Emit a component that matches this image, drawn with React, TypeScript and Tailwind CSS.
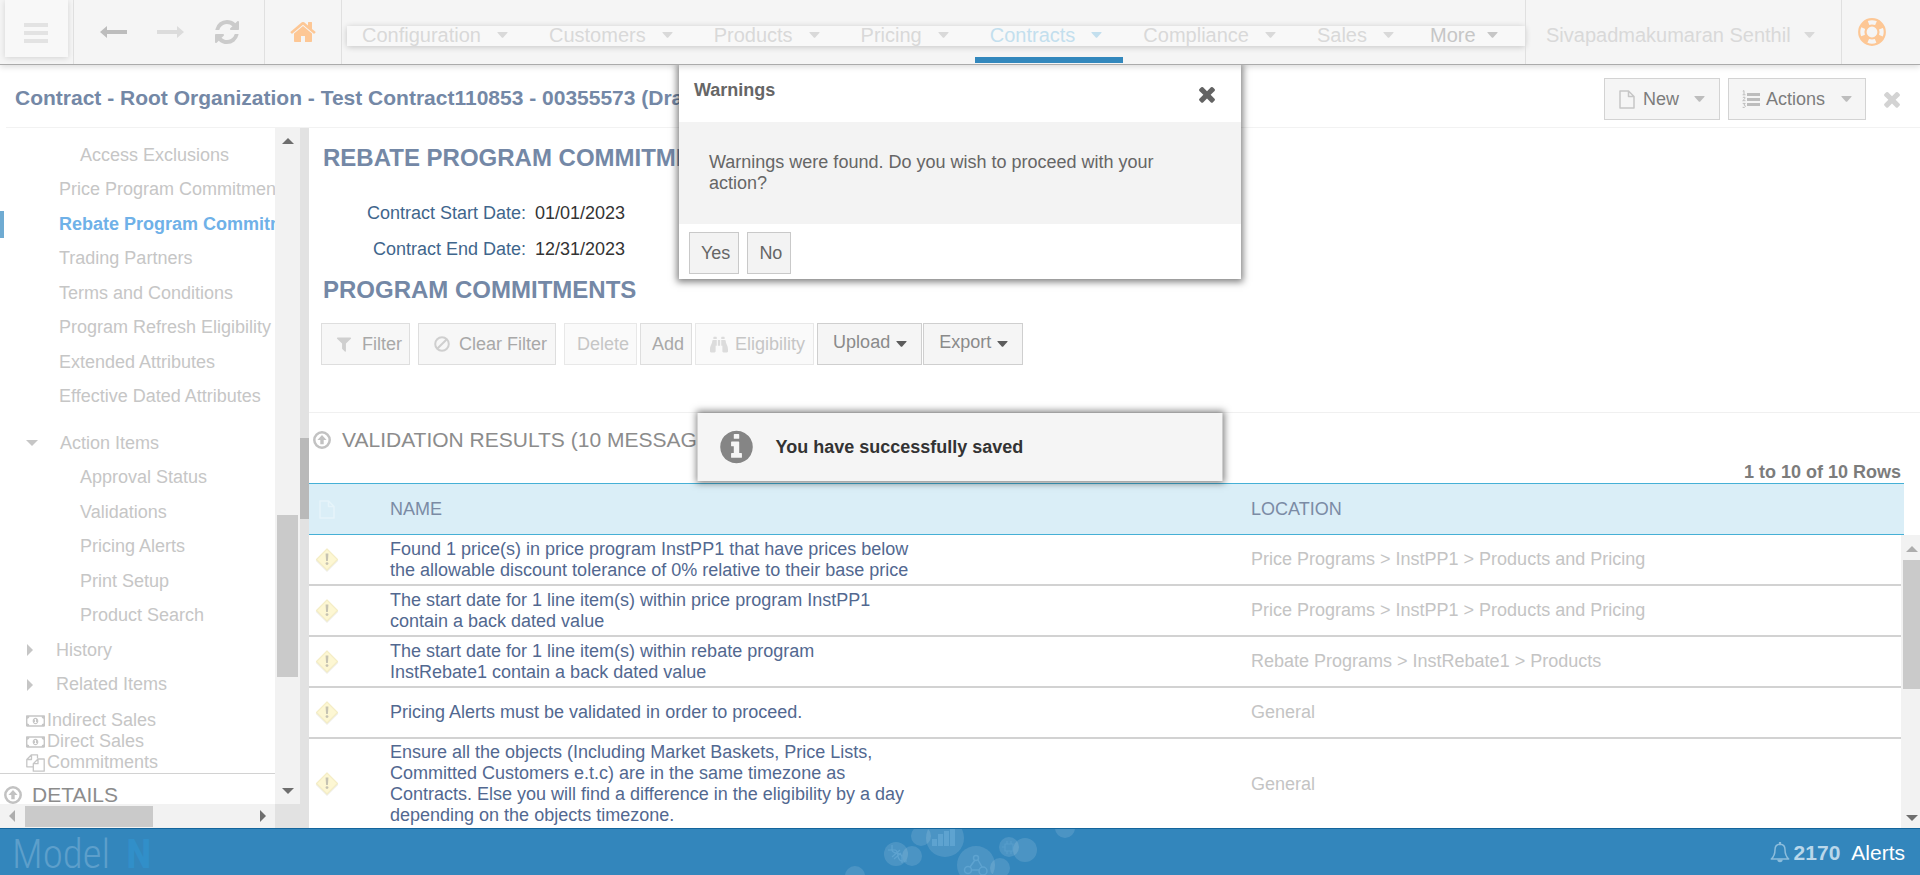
import type { ReactNode } from "react";
import { FaBinoculars, FaRegMoneyBillAlt } from "react-icons/fa";

type IconProps = { className?: string };

function Glyph({ d, className = "" }: { d: string; className?: string }) {
  return (
    <svg viewBox="0 0 1792 1792" fill="currentColor" aria-hidden="true" className={`shrink-0 ${className}`}>
      <path d={d} />
    </svg>
  );
}

const TIMES =
  "M1490 1322q0 40-28 68l-136 136q-28 28-68 28t-68-28l-294-294-294 294q-28 28-68 28t-68-28l-136-136q-28-28-28-68t28-68l294-294-294-294q-28-28-28-68t28-68l136-136q28-28 68-28t68 28l294 294 294-294q28-28 68-28t68 28l136 136q28 28 28 68t-28 68l-294 294 294 294q28 28 28 68z";
const REFRESH =
  "M1639 1056q0 5-1 7-64 268-268 434.5t-478 166.5q-146 0-282.5-55t-243.5-157l-129 129q-19 19-45 19t-45-19-19-45v-448q0-26 19-45t45-19h448q26 0 45 19t19 45-19 45l-137 137q71 66 161 102t187 36q134 0 250-65t186-179q11-17 53-117 8-23 30-23h192q13 0 22.5 9.5t9.5 22.5zm25-800v448q0 26-19 45t-45 19h-448q-26 0-45-19t-19-45 19-45l138-138q-148-137-349-137-134 0-250 65t-186 179q-11 17-53 117-8 23-30 23h-199q-13 0-22.5-9.5t-9.5-22.5v-7q65-268 270-434.5t480-166.5q146 0 284 55.5t245 156.5l130-129q19-19 45-19t45 19 19 45z";
const HOME =
  "M1472 992v480q0 26-19 45t-45 19h-384v-384h-256v384h-384q-26 0-45-19t-19-45v-480q0-1 .5-3t.5-3l575-474 575 474q1 2 1 6zm223-69l-62 74q-8 9-21 11h-3q-13 0-21-7l-692-577-692 577q-12 8-24 7-13-2-21-11l-62-74q-8-10-7-23.5t11-21.5l719-599q32-26 76-26t76 26l244 204v-195q0-14 9-23t23-9h192q14 0 23 9t9 23v408l219 182q10 8 11 21.5t-7 23.5z";
const FILTER =
  "M1595 295q17 41-14 70l-493 493v742q0 42-39 59-13 5-25 5-27 0-45-19l-256-256q-19-19-19-45v-486l-493-493q-31-29-14-70 17-39 59-39h1280q42 0 59 39z";
const INFO =
  "M1152 1376v-160q0-14-9-23t-23-9h-96v-512q0-14-9-23t-23-9h-320q-14 0-23 9t-9 23v160q0 14 9 23t23 9h96v320h-96q-14 0-23 9t-9 23v160q0 14 9 23t23 9h448q14 0 23-9t9-23zm-128-896v-160q0-14-9-23t-23-9h-192q-14 0-23 9t-9 23v160q0 14 9 23t23 9h192q14 0 23-9t9-23zm640 416q0 209-103 385.5t-279.5 279.5-385.5 103-385.5-103-279.5-279.5-103-385.5 103-385.5 279.5-279.5 385.5-103 385.5 103 279.5 279.5 103 385.5z";

function Caret({ className = "" }: IconProps) {
  return (
    <svg viewBox="0 0 12 7" fill="currentColor" aria-hidden="true" className={`h-[6px] w-[11px] shrink-0 ${className}`}>
      <path d="M0.5 0h11q.8.2.3.9L6.6 6.6q-.6.5-1.2 0L.2.9Q-.3.2.5 0z" />
    </svg>
  );
}

function LongArrow({ className = "" }: IconProps) {
  return (
    <svg viewBox="0 0 27 12" fill="currentColor" aria-hidden="true" className={`h-3 w-[27px] ${className}`}>
      <path d="M0 6L7 0v4h20v4H7v4z" />
    </svg>
  );
}

function FileIcon({ className = "" }: IconProps) {
  return (
    <svg viewBox="0 0 16 19" fill="none" stroke="currentColor" strokeWidth="1.5" strokeLinejoin="round" aria-hidden="true" className={`h-[19px] w-4 shrink-0 ${className}`}>
      <path d="M1 1h8.5L15 6.500V18H1zM9.500 1v5.500H15" />
    </svg>
  );
}

function ListIcon({ className = "" }: IconProps) {
  return (
    <svg viewBox="0 0 18 19" fill="none" stroke="currentColor" aria-hidden="true" className={`h-[19px] w-[18px] shrink-0 ${className}`}>
      <path strokeWidth="3" d="M5 4.500h13M5 9.500h13M5 14.500h13" />
      <path strokeWidth="1" d="M.8 1.200l1.200-.6V4.600M.6 4.800h2.900M.8 7.700q1.200-1.100 2.200-.3.700 1-2.300 3.300h2.800M.7 13.400h2.500l-1.300 1.600q1.600.1 1.400 1.500-.4 1.500-2.700.8" />
    </svg>
  );
}

function BanIcon({ className = "" }: IconProps) {
  return (
    <svg viewBox="0 0 16 16" fill="none" stroke="currentColor" strokeWidth="2" aria-hidden="true" className={`h-4 w-4 shrink-0 ${className}`}>
      <circle cx="8" cy="8" r="6.800" />
      <path d="M3.200 12.800l9.600-9.600" />
    </svg>
  );
}

function CircleUp({ className = "" }: IconProps) {
  return (
    <svg viewBox="0 0 18 18" aria-hidden="true" className={`h-[18px] w-[18px] shrink-0 ${className}`}>
      <circle cx="9" cy="9" r="7.700" fill="none" stroke="currentColor" strokeWidth="2.500" />
      <path fill="currentColor" d="M9 4.100L13.600 9h-2.900v4.200H7.300V9H4.400z" />
    </svg>
  );
}

function LifeRing({ className = "" }: IconProps) {
  return (
    <svg viewBox="0 0 28 28" fill="none" stroke="currentColor" aria-hidden="true" className={`h-7 w-7 ${className}`}>
      <circle cx="14" cy="14" r="12.800" strokeWidth="2.200" />
      <circle cx="14" cy="14" r="6.500" strokeWidth="2.200" />
      <circle cx="14" cy="14" r="9.800" strokeWidth="6" strokeDasharray="7.700 7.690" strokeDashoffset="-3.850" />
    </svg>
  );
}

function CopyIcon({ className = "" }: IconProps) {
  return (
    <svg viewBox="0 0 19 18" fill="none" stroke="currentColor" strokeWidth="1.300" strokeLinejoin="round" aria-hidden="true" className={`h-[18px] w-[19px] shrink-0 ${className}`}>
      <path d="M11.500 4.500V.8H5.500L.8 5.500v7.300h6.500M5.500.8v4.700H.8" />
      <path d="M12 5h6.200v12.200H7.300V9.700zM12 5v4.700H7.300" />
    </svg>
  );
}

function BellIcon({ className = "" }: IconProps) {
  return (
    <svg viewBox="0 0 20 21" fill="none" stroke="currentColor" strokeWidth="1.500" aria-hidden="true" className={`h-[21px] w-5 ${className}`}>
      <path strokeLinejoin="round" d="M10 2.200c-3.200 0-5 2.400-5 5.500 0 5-1.600 7.300-3.700 9.300h17.400c-2.100-2-3.700-4.300-3.700-9.300 0-3.100-1.800-5.500-5-5.500z" />
      <path fill="currentColor" stroke="none" d="M8.900 0h2.200v2.500H8.900zM7.300 17.500h5.400a2.700 2.700 0 0 1-5.400 0z" />
    </svg>
  );
}

function WarningIcon({ className = "" }: IconProps) {
  return (
    <svg viewBox="0 0 24 24" aria-hidden="true" className={`h-6 w-6 ${className}`}>
      <path d="M12 2.500L23.300 12.800 12 24 .7 12.800z" fill="#eeeeea" />
      <path d="M12 1L22.500 11.500 12 22 1.500 11.500z" fill="#fdf7d3" stroke="#f4edc6" strokeWidth="1.200" strokeLinejoin="round" />
      <path d="M10.600 5.500h2.800l-.5 7.500h-1.800z" fill="#c6c3b2" />
      <circle cx="12" cy="15.600" r="1.400" fill="#c6c3b2" />
    </svg>
  );
}

function Triangle({ dir, className = "" }: { dir: "up" | "down" | "left" | "right"; className?: string }) {
  const paths = { up: "M0 9L6 3l6 6z", down: "M0 3h12L6 9z", left: "M9 0v12L3 6z", right: "M3 0l6 6-6 6z" };
  return (
    <svg viewBox="0 0 12 12" fill="currentColor" aria-hidden="true" className={`h-3 w-3 shrink-0 ${className}`}>
      <path d={paths[dir]} />
    </svg>
  );
}

const menus = ["Configuration", "Customers", "Products", "Pricing", "Contracts", "Compliance", "Sales"];

function TopBar() {
  return (
    <header className="relative z-20 flex h-[65px] shrink-0 border-b border-[#ababab] bg-[#f5f5f5] text-[20px] text-[#d9d9d9] shadow-[0_2px_6px_rgba(0,0,0,0.14)]">
      <div className="w-[74px] shrink-0 border-r border-[#e0e0e0] pl-[5px]">
        <button aria-label="Menu" className="flex h-[57px] w-[63px] flex-col items-center justify-center gap-1 bg-[#f8f8f8] pr-[2px] pt-2 shadow-[0_1px_6px_rgba(0,0,0,0.14)]">
          <span className="h-1 w-6 bg-[#e3e3e3]" />
          <span className="h-1 w-6 bg-[#e3e3e3]" />
          <span className="h-1 w-6 bg-[#e3e3e3]" />
        </button>
      </div>
      <div className="flex w-[191px] shrink-0 items-center gap-[30px] border-r border-[#e0e0e0] pl-[26px]">
        <button aria-label="Back" className="text-[#bdbdbd]"><LongArrow /></button>
        <button aria-label="Forward" className="text-[#dcdcdc]"><LongArrow className="rotate-180" /></button>
        <button aria-label="Refresh" className="-ml-px text-[#cbcbcb]"><Glyph d={REFRESH} className="h-7 w-7" /></button>
      </div>
      <div className="flex w-[77px] shrink-0 items-center justify-center border-r border-[#e0e0e0]">
        <a href="#home" aria-label="Home" className="text-[#fdc795]"><Glyph d={HOME} className="h-7 w-7" /></a>
      </div>
      <nav className="ml-[5px] mt-[26px] flex h-5 min-w-0 flex-1 items-center gap-[5px] bg-[#f8f8f8] pb-[2px] leading-[20px] shadow-[0_1px_6px_rgba(0,0,0,0.2)]">
        {menus.map((m) => (
          <button
            key={m}
            className={`relative flex items-center gap-4 pl-[15px] pr-[21px] ${m === "Contracts" ? "text-[#c3dfee]" : ""}`}
          >
            {m}
            <Caret />
            {m === "Contracts" && <span className="absolute -bottom-[18px] left-0 h-[6px] w-full bg-[#3388bd]" />}
          </button>
        ))}
        <button className="flex items-center gap-[11px] pl-[10px] text-[#c6c6c6]">
          More
          <Caret />
        </button>
      </nav>
      <button className="flex w-[317px] shrink-0 items-center justify-between border-x border-[#e0e0e0] pl-5 pr-[26px] pt-[6px] leading-[20px]">
        Sivapadmakumaran Senthil
        <Caret />
      </button>
      <div className="flex w-[78px] shrink-0 items-center pl-4">
        <a href="#help" aria-label="Help" className="text-[#fdc795]"><LifeRing /></a>
      </div>
    </header>
  );
}

function TitleBar() {
  return (
    <div className="ml-[6px] flex h-[63px] shrink-0 items-center border-b border-[#f2f2f2] pl-[9px] pr-4 pt-1">
      <h1 className="min-w-0 flex-1 truncate text-[21px] font-bold leading-[24px] text-[#7488a6]">
        Contract - Root Organization - Test Contract110853 - 00355573 (Draft)
      </h1>
      <div className="flex items-center gap-2 pt-[2px] text-[18px] text-[#7c7c7c]">
        <button className="flex h-[42px] items-center border border-[#d3d3d3] bg-[#f5f5f5] px-[14px]">
          <FileIcon className="mr-2 text-[#c6c6c6]" />
          New
          <Caret className="ml-[15px] text-[#bdbdbd]" />
        </button>
        <button className="flex h-[42px] items-center border border-[#d3d3d3] bg-[#f5f5f5] px-[13px]">
          <ListIcon className="mr-[6px] text-[#bdbdbd]" />
          Actions
          <Caret className="ml-4 text-[#bdbdbd]" />
        </button>
        <button aria-label="Close contract" className="ml-[6px] text-[#d3d3d3]">
          <Glyph d={TIMES} className="h-6 w-6" />
        </button>
      </div>
    </div>
  );
}

const pages = [
  "Price Program Commitments",
  "Rebate Program Commitments",
  "Trading Partners",
  "Terms and Conditions",
  "Program Refresh Eligibility",
  "Extended Attributes",
  "Effective Dated Attributes",
];
const actions = ["Approval Status", "Validations", "Pricing Alerts", "Print Setup", "Product Search"];

function NavLink({ className, children }: { className: string; children: ReactNode }) {
  return (
    <a href="#page" className={`flex items-center whitespace-nowrap ${className}`}>
      {children}
    </a>
  );
}

function Sidebar() {
  return (
    <aside className="flex w-[300px] shrink-0 flex-col">
      <div className="flex min-h-0 flex-1">
        <div className="flex min-w-0 flex-1 flex-col overflow-hidden text-[18px] text-[#c6c6c6]">
          <div className="mt-[10px] grid h-[276px] shrink-0 auto-rows-fr">
            <NavLink className="pl-20">Access Exclusions</NavLink>
            {pages.map((p) =>
              p.startsWith("Rebate") ? (
                <NavLink key={p} className="relative pl-[59px] font-bold text-[#6fb1e8]">
                  <span className="absolute left-0 h-[27px] w-1 bg-[#6fabd2]" />
                  {p}
                </NavLink>
              ) : (
                <NavLink key={p} className="pl-[59px]">{p}</NavLink>
              ),
            )}
          </div>
          <div className="mt-3 grid h-[276px] shrink-0 auto-rows-fr">
            <NavLink className="gap-[22px] pl-[26px]"><Triangle dir="down" />Action Items</NavLink>
            {actions.map((a) => (
              <NavLink key={a} className="pl-20">{a}</NavLink>
            ))}
            <NavLink className="gap-5 pl-6"><Triangle dir="right" />History</NavLink>
            <NavLink className="gap-5 pl-6"><Triangle dir="right" />Related Items</NavLink>
          </div>
          <div className="mt-2 shrink-0 border-b border-[#d2d2d2] pl-[26px] leading-[21px]">
            <NavLink className="gap-[2px]"><FaRegMoneyBillAlt className="h-5 w-[19px]" />Indirect Sales</NavLink>
            <NavLink className="gap-[2px]"><FaRegMoneyBillAlt className="h-5 w-[19px]" />Direct Sales</NavLink>
            <NavLink className="gap-[2px]"><CopyIcon />Commitments</NavLink>
          </div>
          <button className="mt-2 flex shrink-0 items-center gap-[10px] pl-1 text-[21px] leading-[26px] text-[#8c8c8c]">
            <CircleUp className="text-[#c2c2c2]" />
            DETAILS
          </button>
        </div>
        <div className="flex w-[25px] flex-col items-center justify-between bg-[#f2f2f2] py-[7px] text-[#6e6e6e]">
          <Triangle dir="up" />
          <span className="mt-[260px] h-[162px] w-[21px] bg-[#cacaca]" />
          <Triangle dir="down" />
        </div>
      </div>
      <div className="flex h-6 shrink-0">
        <div className="flex flex-1 items-center bg-[#f2f2f2] pl-[6px] pr-[6px]">
          <Triangle dir="left" className="text-[#adadad]" />
          <span className="ml-[7px] mr-auto h-[21px] w-32 bg-[#cacaca]" />
          <Triangle dir="right" className="text-[#6e6e6e]" />
        </div>
        <div className="w-[25px] bg-[#e2e2e2]" />
      </div>
    </aside>
  );
}

function Toolbar() {
  const base = "flex h-[42px] items-center border";
  return (
    <div className="mt-[19px] flex pl-3 text-[18px] text-[#a8a8a8]">
      <button className={`${base} mr-2 gap-[9px] border-[#dedede] bg-[#f7f7f7] pl-[13px] pr-[7px]`}>
        <Glyph d={FILTER} className="h-[18px] w-[18px] text-[#cfcfcf]" />
        Filter
      </button>
      <button className={`${base} mr-2 gap-[9px] border-[#dedede] bg-[#f7f7f7] pl-[15px] pr-2`}>
        <BanIcon className="text-[#cfcfcf]" />
        Clear Filter
      </button>
      <button disabled className={`${base} mr-[3px] border-[#e8e8e8] bg-[#fafafa] pl-3 pr-[7px] text-[#c6c6c6]`}>Delete</button>
      <button className={`${base} mr-[3px] border-[#dedede] bg-[#f7f7f7] pl-[11px] pr-[7px]`}>Add</button>
      <button disabled className={`${base} mr-[3px] gap-[7px] border-[#e8e8e8] bg-[#fafafa] pl-[14px] pr-2 text-[#c6c6c6]`}>
        <FaBinoculars className="h-[19px] w-[18px] text-[#dcdcdc]" />
        Eligibility
      </button>
      <button className={`${base} mr-px gap-[6px] border-[#cfcfcf] bg-[#f5f5f5] pb-1 pl-[15px] pr-[14px] text-[#8a8a8a]`}>
        Upload
        <Caret className="mt-1 text-[#5c5c5c]" />
      </button>
      <button className={`${base} gap-[6px] border-[#cfcfcf] bg-[#f5f5f5] pb-1 pl-[15px] pr-[14px] text-[#8a8a8a]`}>
        Export
        <Caret className="mt-1 text-[#5c5c5c]" />
      </button>
    </div>
  );
}

const messages = [
  ["Found 1 price(s) in price program InstPP1 that have prices below the allowable discount tolerance of 0% relative to their base price", "Price Programs > InstPP1 > Products and Pricing"],
  ["The start date for 1 line item(s) within price program InstPP1 contain a back dated value", "Price Programs > InstPP1 > Products and Pricing"],
  ["The start date for 1 line item(s) within rebate program InstRebate1 contain a back dated value", "Rebate Programs > InstRebate1 > Products"],
  ["Pricing Alerts must be validated in order to proceed.", "General"],
  ["Ensure all the objects (Including Market Baskets, Price Lists, Committed Customers e.t.c) are in the same timezone as Contracts. Else you will find a difference in the eligibility by a day depending on the objects timezone.", "General"],
];

function Results() {
  return (
    <section className="flex min-h-0 flex-1 flex-col border-t border-[#f0f0f0]">
      <div className="flex h-[70px] shrink-0 justify-between pl-1 pr-[19px]">
        <button className="mt-[14px] flex h-[26px] items-center gap-[11px] text-[21px] text-[#8c8c8c]">
          <CircleUp className="text-[#c2c2c2]" />
          VALIDATION RESULTS (10 MESSAGES)
        </button>
        <p className="self-end text-[18px] font-bold leading-[22px] text-[#7c7c7c]">1 to 10 of 10 Rows</p>
      </div>
      <div className="flex min-h-0 flex-1">
        <div className="min-w-0 flex-1 overflow-hidden">
          <table className="w-full table-fixed border-separate border-spacing-0 text-left text-[18px] leading-[21px]">
            <colgroup>
              <col className="w-[81px]" />
              <col />
              <col className="w-[650px]" />
            </colgroup>
            <thead>
              <tr className="h-[52px] bg-[#daeef7] text-[#7b8ba5]">
                <th className="border-y border-[#45b0d6] pl-[10px] font-normal"><FileIcon className="text-[#e6f4fa]" /></th>
                <th className="border-y border-[#45b0d6] font-normal">NAME</th>
                <th className="border-y border-[#45b0d6] font-normal">LOCATION</th>
              </tr>
            </thead>
            <tbody>
              {messages.map(([name, location], i) => (
                <tr key={i} className="h-[51px]">
                  <td className={`pl-[6px] ${i < 4 ? "border-b-2 border-[#d2d2d2]" : ""}`}><WarningIcon /></td>
                  <td className={`py-[3px] text-[#526890] ${i < 4 ? "border-b-2 border-[#d2d2d2]" : ""}`}>
                    <p className="max-w-[522px]">{name}</p>
                  </td>
                  <td className={`text-[#c4c4c4] ${i < 4 ? "border-b-2 border-[#d2d2d2]" : ""}`}>{location}</td>
                </tr>
              ))}
            </tbody>
          </table>
        </div>
        <div className="flex w-[19px] shrink-0 flex-col">
          <div className="h-[52px] w-[3px] border-y border-[#45b0d6] bg-[#daeef7]" />
          <div className="flex flex-1 flex-col items-center bg-[#f2f2f2] pb-1 pl-[2px] pt-2 text-[#adadad]">
            <Triangle dir="up" />
            <span className="mt-[5px] h-[129px] w-full bg-[#cacaca]" />
            <Triangle dir="down" className="mt-auto text-[#6e6e6e]" />
          </div>
        </div>
      </div>
    </section>
  );
}

function WarningsDialog() {
  return (
    <div role="dialog" aria-labelledby="warnings-title" className="absolute left-1/2 top-[65px] z-10 w-[562px] -translate-x-1/2 bg-white text-[18px] text-[#666] shadow-[0_1px_7px_2px_rgba(0,0,0,0.5)]">
      <div className="flex h-[57px] items-start justify-between pl-[15px] pr-[22px] pt-[14px]">
        <h2 id="warnings-title" className="font-bold leading-[22px]">Warnings</h2>
        <button aria-label="Close" className="pt-[3px] text-[#636363]"><Glyph d={TIMES} className="h-6 w-6" /></button>
      </div>
      <p className="bg-[#f3f3f3] px-[30px] py-[30px] pr-20 leading-[21px]">
        Warnings were found. Do you wish to proceed with your action?
      </p>
      <div className="flex gap-2 px-[10px] pb-[5px] pt-2">
        <button className="h-[42px] border border-[#c9c9c9] bg-[#f3f3f3] pl-[11px] pr-2">Yes</button>
        <button className="h-[42px] border border-[#c9c9c9] bg-[#f3f3f3] pl-[11px] pr-2">No</button>
      </div>
    </div>
  );
}

function Toast() {
  return (
    <div role="status" className="absolute left-1/2 top-[413px] z-10 flex h-[68px] w-[525px] -translate-x-1/2 items-center gap-5 bg-[#f5f5f5] pl-5 shadow-[0_0_7px_2px_rgba(0,0,0,0.5)]">
      <Glyph d={INFO} className="h-[38px] w-[38px] text-[#858585]" />
      <p className="text-[18px] font-bold leading-[22px] text-[#333]">You have successfully saved</p>
    </div>
  );
}

function Bubbles() {
  return (
    <svg viewBox="0 0 240 46" aria-hidden="true" className="absolute left-1/2 top-0 h-[46px] w-[240px] -translate-x-1/2">
      <g fill="#fff" fillOpacity="0.120">
        <circle cx="81" cy="7" r="10" />
        <circle cx="105" cy="9" r="19" />
        <circle cx="56" cy="25" r="12" />
        <circle cx="72" cy="27" r="10" />
        <circle cx="136" cy="36" r="19" />
        <circle cx="160" cy="39" r="10" />
        <circle cx="169" cy="18" r="10" />
        <circle cx="185" cy="21" r="12" />
        <circle cx="225" cy="-1" r="10" />
        <circle cx="15" cy="47" r="10" />
      </g>
      <path fill="#5ea3d0" d="M92 10h5v7h-5zM98 5h5v12h-5zM104 2h5v15h-5zM110-2h5v19h-5z" />
      <g fill="none" stroke="#5ea3d0" strokeWidth="1.500">
        <circle cx="136" cy="29" r="2.500" />
        <circle cx="128" cy="41" r="3.500" />
        <circle cx="143" cy="42" r="4" />
        <path d="M135 31l-5 7M138 31l4 7M132 41h7" />
        <path strokeWidth="1.200" d="M48 21h7c4 0 1 11 7 11h5M52 16v5c0 5 10 1 10 7v6M52 28l8-7M54 30l7-6" />
        <path strokeWidth="1.200" strokeOpacity="0.600" d="M165 15h8v7h-8zM167 15v-3M171 15v-3M167 22v3M171 22v3M165 18h-3M173 18h3" />
      </g>
    </svg>
  );
}

function Footer() {
  return (
    <footer className="relative z-20 flex h-[47px] shrink-0 items-center justify-between overflow-hidden border-t border-[#14659c] bg-[#3386bc] pl-3 pr-[15px]">
      <div className="flex items-center gap-4 pt-1 font-['Roboto_Condensed','Liberation_Sans_Narrow',sans-serif] text-[41px] leading-[46px]">
        <span className="font-light text-[#5d9fcb]">Model</span>
        <span className="font-bold text-[#318fc9]">N</span>
      </div>
      <Bubbles />
      <a href="#alerts" className="flex items-center pt-px text-[21px] leading-[24px]">
        <BellIcon className="mr-1 text-[#8cbddc]" />
        <span className="mr-[11px] font-bold text-[#b9d7ea]">2170</span>
        <span className="text-white">Alerts</span>
      </a>
    </footer>
  );
}

export default function App() {
  return (
    <div className="relative flex h-screen flex-col overflow-hidden bg-white font-['Liberation_Sans',Arial,sans-serif]">
      <TopBar />
      <TitleBar />
      <div className="flex min-h-0 flex-1">
        <Sidebar />
        <div className="w-[9px] shrink-0 bg-[#e2e2e2] pt-[310px]">
          <div className="h-[81px] bg-[#b9b9b9]" />
        </div>
        <main className="flex min-w-0 flex-1 flex-col">
          <div className="h-[284px] shrink-0 pt-4">
            <h2 className="pl-[14px] text-[24px] font-bold leading-[28px] text-[#7488a6]">REBATE PROGRAM COMMITMENTS</h2>
            <dl className="mt-[23px] grid grid-cols-[217px_1fr] gap-x-[9px] text-[18px] leading-[36px]">
              <dt className="text-right text-[#3f668c]">Contract Start Date:</dt>
              <dd className="text-[#333]">01/01/2023</dd>
              <dt className="text-right text-[#3f668c]">Contract End Date:</dt>
              <dd className="text-[#333]">12/31/2023</dd>
            </dl>
            <h2 className="mt-[9px] pl-[14px] text-[24px] font-bold leading-[28px] text-[#7488a6]">PROGRAM COMMITMENTS</h2>
            <Toolbar />
          </div>
          <Results />
        </main>
      </div>
      <WarningsDialog />
      <Toast />
      <Footer />
    </div>
  );
}
